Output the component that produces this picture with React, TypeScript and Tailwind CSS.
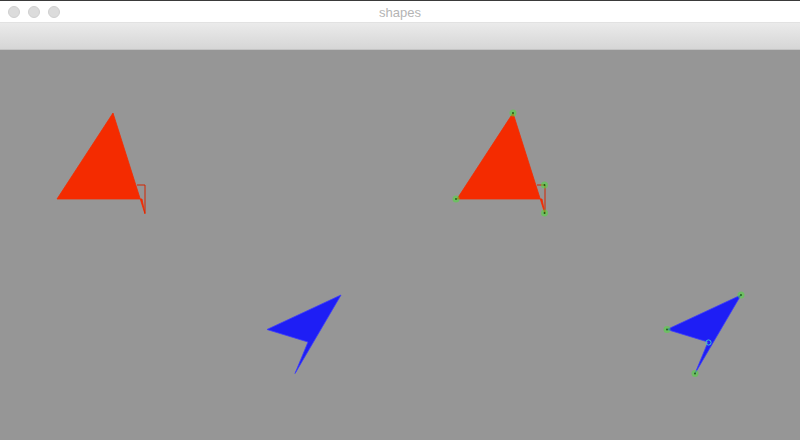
import React from 'react';

const red = '#f42b00';
const blue = '#1e1ef5';

// control point marker (green dot with a dark centre)
const Handle = ({ x, y }: { x: number; y: number }) => (
  <g>
    <circle cx={x} cy={y} r={3.5} fill="#4ee03a" opacity={0.55} />
    <circle cx={x} cy={y} r={0.9} fill="#1d5a14" />
  </g>
);

const Sail = ({ dx, handles }: { dx: number; handles?: boolean }) => (
  <g transform={`translate(${dx} 0)`}>
    <polygon points="113,113 145,214 142,199 57,199" fill={red} stroke={red} strokeWidth={0.8} strokeLinejoin="round" />
    <polyline points="137,185 145,185 145,213" fill="none" stroke="#d42400" strokeWidth={1} />
    {handles && (
      <>
        <Handle x={113} y={113} />
        <Handle x={56} y={199} />
        <Handle x={144.5} y={185} />
        <Handle x={144.5} y={213} />
      </>
    )}
  </g>
);

const Arrow = ({ dx, handles }: { dx: number; handles?: boolean }) => (
  <g transform={`translate(${dx} 0)`}>
    <polygon points="341,295 267,329.5 308,342 295,373.5" fill={blue} stroke="#3a3aff" strokeWidth={0.8} strokeLinejoin="round" />
    {handles && (
      <>
        <Handle x={341} y={295} />
        <Handle x={267} y={329.5} />
        <Handle x={295} y={373.5} />
        <circle cx={308.5} cy={342.5} r={2.6} fill="none" stroke="#3cc8c8" strokeWidth={1} />
      </>
    )}
  </g>
);

const TrafficLight = () => (
  <span className="w-3 h-3 rounded-full bg-[#dcdcdc] border border-[#d0d0d0]" />
);

export default function App() {
  return (
    <div className="w-[800px] h-[440px] flex flex-col bg-[#969696] overflow-hidden" style={{ fontFamily: '"Liberation Sans", Arial, sans-serif' }}>
      {/* title bar */}
      <div className="relative h-[23px] bg-white border-t border-[#3a3a3a] border-b border-b-[#e2e2e2] flex items-center">
        <div className="flex gap-2 pl-2 pt-px">
          <TrafficLight />
          <TrafficLight />
          <TrafficLight />
        </div>
        <div className="absolute inset-0 flex items-center justify-center pt-[2px] text-[13px] text-[#b4b4b4]">shapes</div>
      </div>

      {/* toolbar */}
      <div className="h-[27px] bg-gradient-to-b from-[#ebebeb] to-[#d6d6d6] border-b border-[#c4c4c4]" />

      {/* canvas */}
      <div className="flex-1">
        <svg width={800} height={390} viewBox="0 50 800 390" className="block">
          <Sail dx={0} />
          <Sail dx={400} handles />
          <Arrow dx={0} />
          <Arrow dx={400} handles />
        </svg>
      </div>
    </div>
  );
}
